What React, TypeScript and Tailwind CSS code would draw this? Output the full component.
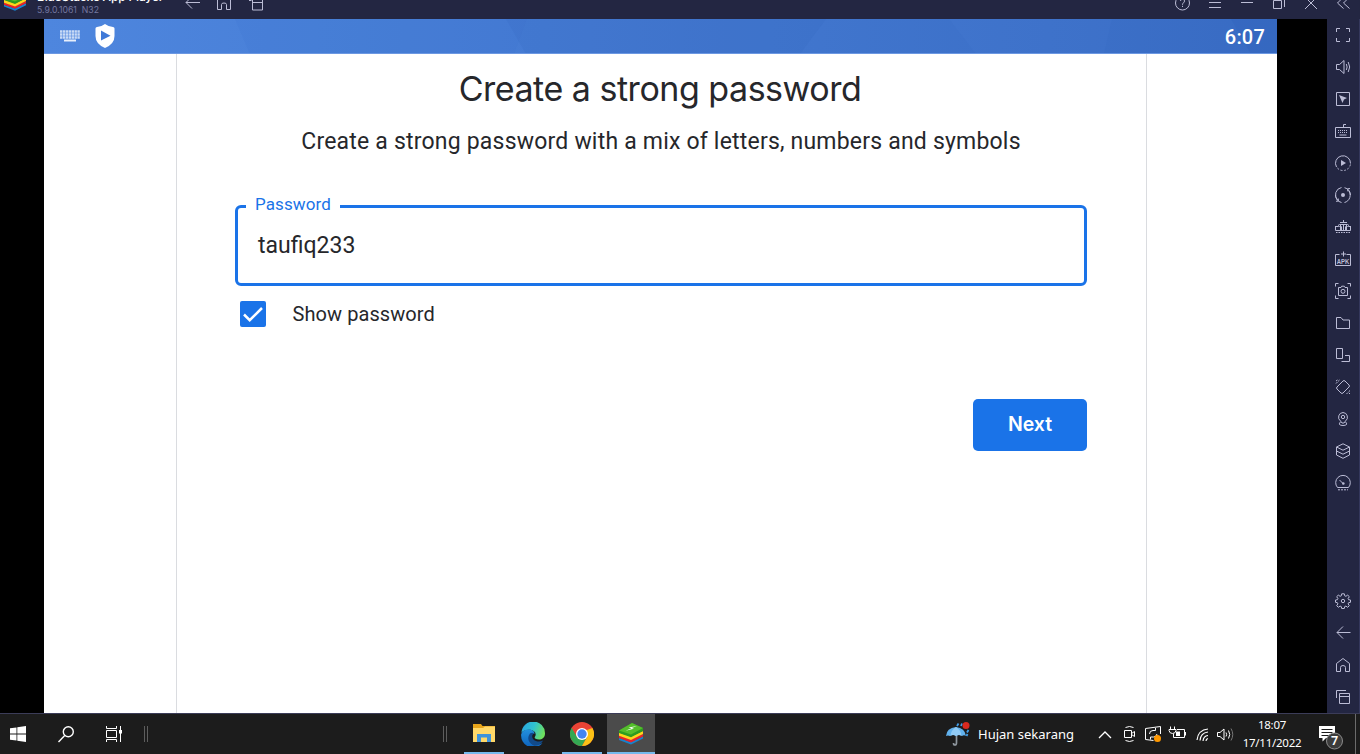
import type { ReactNode } from "react";

function ToolIcon({ children }: { children: ReactNode }) {
  return (
    <button className="flex h-8 w-full shrink-0 items-center pl-2">
      <svg width="16" height="16" viewBox="0 0 16 16" fill="none" stroke="#bcbdd6" strokeWidth="1" className="overflow-visible">
        {children}
      </svg>
    </button>
  );
}

function BlueStacksLogo({ className }: { className: string }) {
  return (
    <svg viewBox="0 0 24 24" className={className}>
      <path d="M0 16 12 20 24 14.500v2L12 22.500 0 18z" fill="#1583cf" />
      <path d="M0 13.500 12 17.500 24 12v2.500L12 20.500 0 16z" fill="#e5232c" />
      <path d="M0 10.500 12 14.500 24 9v3L12 18 0 13.800z" fill="#ffd51c" />
      <path d="M13 1 24 6v3L12 15.300 0 11V8.500z" fill="#2c9c20" />
      <path d="M13 1 24 6 12 12.500 0 8.500z" fill="#55bd2c" />
      <path d="M18 4 9.500 5.500l3 .7L6.500 8.700 15 6.700l-2.500-.8z" fill="#fff" />
    </svg>
  );
}

function TitleBar() {
  return (
    <header className="flex h-[19px] w-full shrink-0 items-start overflow-hidden bg-[#232642]">
      <div className="h-[19px] w-[37px] shrink-0 pl-1">
        <BlueStacksLogo className="-mt-[11px] h-[24px] w-[22px]" />
      </div>
      <div className="-mt-[11px] flex w-[148px] shrink-0 flex-col whitespace-nowrap font-['Inter',sans-serif]">
        <span className="h-4 text-[12px] leading-[16px] font-medium tracking-[-0.15px] text-white">BlueStacks App Player</span>
        <span className="h-3 text-[8.700px] leading-[11px] whitespace-pre text-[#7477a0]">5.9.0.1061  N32</span>
      </div>
      <svg width="80" height="19" viewBox="185 0 80 19" fill="none" stroke="#bcbdd6" className="shrink-0">
        <path d="M186 2.500h14M192 -3.500 186 2.500l6 6" />
        <path d="M217.500 -1v10.500h4V4.500q0-1.500 2.500-1.500t2.500 1.500v5h4V-1" />
        <path d="M249 .5h2.500M252.500 -2v12h10V-2M252.500 2.500h10" />
      </svg>
      <div className="grow" />
      <svg width="190" height="19" viewBox="1170 0 190 19" fill="none" stroke="#bcbdd6" className="shrink-0">
        <circle cx="1182.500" cy="3" r="7" />
        <path d="M1180.500 1q0-2 2-2t2 2q0 1-1 1.800t-1 2M1182.500 5.800v1.200" />
        <path d="M1209 2.500h12M1209 7.500h12" />
        <path d="M1241 2.500h12" />
        <path d="M1273.500 .5h8v8h-8zM1275 -2.500h9.500V7" />
        <path d="m1305 -3 12 12M1317 -3l-12 12" />
        <path d="m1343.500 -3-6 6 6 5.500M1349.500 -3l-6 6 6 5.500" />
      </svg>
    </header>
  );
}

function Sidebar() {
  return (
    <aside className="flex h-full w-[33px] shrink-0 flex-col border-r border-[#34375c] bg-[#232642]">
      <ToolIcon><path d="M1.500 5V1.500H5M11 1.500h3.500V5M14.500 11v3.500H11M5 14.500H1.500V11" /></ToolIcon>
      <ToolIcon>
        <path d="M1.500 5.500h3l4.500-4v13l-4.500-4h-3zM11.300 5q1.600 3 0 6M13.200 3q3 5 0 10" />
      </ToolIcon>
      <ToolIcon>
        <path d="M1.500 1.500h13v13h-13z" />
        <path d="M4 4l8 3-3 1.500L7.500 12z" fill="#bcbdd6" stroke="none" />
      </ToolIcon>
      <ToolIcon>
        <path d="M.5 4.500h15v10H.5zM8.500 4V1.500H11" />
        <path d="M3 7.500h10M3 9.500h10" strokeDasharray="1 1" />
        <path d="M4.500 12h7" />
      </ToolIcon>
      <ToolIcon>
        <path d="M1.500 12A7.500 7.500 0 1 1 15.500 8.500" />
        <path d="M15.400 9.500A7.500 7.500 0 0 1 2 12.500" strokeDasharray="2 1.600" />
        <path d="M6 5v6l5-3z" fill="#bcbdd6" stroke="none" />
      </ToolIcon>
      <ToolIcon>
        <path d="M6.500 .5A7.500 7.500 0 0 0 2.500 13M9.500 .7q5.500 1.300 6 7.300M13.500 3.500A7.500 7.500 0 0 1 9.500 15.500M.5 8q.3 6 6 7.500" />
        <path d="m1 14.300 2.300-.2V11.500M15 1.500l-2.300.3v2.500" />
        <circle cx="8" cy="8" r="2" fill="#bcbdd6" stroke="none" />
      </ToolIcon>
      <ToolIcon>
        <path d="M8.500 1v3M5 3.500h7M3.500 6.500q0-1 1-1h8q1 0 1 1M.5 7v4.500h15V7M.5 7.500h3v-1M15.500 7.500h-2v-1M5.500 6v5M8.500 6v5M11.500 6v5" />
        <path d="M4.500 8 5.500 6.500 6.500 8v3M10.500 11V8l1-1.500 1 1.500" />
        <path d="M1 13.500h14" strokeDasharray="1.500 1" />
      </ToolIcon>
      <ToolIcon>
        <path d="M4.500 3.500h-4v11h15v-11h-4M8.500 .5v5M6 3h5" />
        <text x="8" y="12.700" textAnchor="middle" textLength="12.500" fontSize="7" fontWeight="700" fontFamily="Liberation Sans, sans-serif" fill="#bcbdd6" stroke="none" lengthAdjust="spacingAndGlyphs">APK</text>
      </ToolIcon>
      <ToolIcon>
        <path d="M.5 3.500v-3h3M12.500 .5h3v3M15.500 12.500v3h-3M3.500 15.500h-3v-3" />
        <path d="M3.500 4.500H6l.7-1.300h2.600l.7 1.300h2.500v8h-9z" />
        <circle cx="8" cy="8.300" r="2" />
      </ToolIcon>
      <ToolIcon><path d="M1.500 13.500v-11H6l2 2.500h6.500v8.500z" /></ToolIcon>
      <ToolIcon><path d="M1.500 1.500h6v10h-6zM10 8.500h4.500v6h-8" /></ToolIcon>
      <ToolIcon>
        <path d="m10 2 4 4q1 1 0 2l-6 6q-1 1-2 0l-4-4q-1-1 0-2l6-6q1-1 2 0z" />
        <path d="M1 4.500 4.500 1M1 2l1.500-1M11.500 15l3.500-3.500M14 15l1-1" strokeDasharray="2 1" />
      </ToolIcon>
      <ToolIcon>
        <path d="M8 1.500a4.700 4.700 0 0 1 2.500 8.500L9 12H7l-1.500-2A4.700 4.700 0 0 1 8 1.500z" />
        <circle cx="8" cy="6" r="1.700" />
        <path d="M5.500 11Q4 12 4.500 13.500q1 1 3.500 1t3.500-1q.5-1.500-1-2.500" />
      </ToolIcon>
      <ToolIcon>
        <path d="M8 .8 14.500 4 8 7.200 1.500 4zM1.500 4v8L8 15.300 14.500 12V4M1.500 8 8 11.200 14.500 8" />
      </ToolIcon>
      <ToolIcon>
        <path d="M2.500 12.500A7.300 7.300 0 1 1 13.500 12.500zM4.500 5 8 8.500" />
        <circle cx="8.300" cy="8.500" r="1.300" fill="#bcbdd6" stroke="none" />
        <path d="M3 14.800h10" strokeDasharray="2 1" />
      </ToolIcon>
      <div className="grow" />
      <ToolIcon>
        <path d="M6.700.8h2.600l.4 2 1.200.5 1.800-1.200 1.600 1.600L13.100 5.500l.5 1.200 1.900.3v2.300l-1.900.4-.5 1.200 1.200 1.800-1.600 1.600-1.800-1.200-1.200.5-.4 1.900H6.700l-.4-1.900-1.200-.5-1.800 1.200-1.600-1.600 1.200-1.800-.5-1.200L.5 9.300V7l1.900-.3.5-1.200-1.200-1.800 1.600-1.600 1.800 1.200 1.200-.5z" />
        <circle cx="8" cy="8" r="1.700" />
      </ToolIcon>
      <ToolIcon><path d="M2 7.500h13.500M8 1.500l-6 6 6 6" /></ToolIcon>
      <ToolIcon><path d="M1.500 14.500v-8L8 1.500l6.500 5v8h-4v-4q0-2-2.500-2t-2.500 2v4z" /></ToolIcon>
      <ToolIcon><path d="M1.500 9V1.500H11M4.500 4.500h10v10h-10zM4.500 7.500h10" /></ToolIcon>
    </aside>
  );
}

function StatusBar() {
  return (
    <div className="relative flex h-[35px] shrink-0 items-center justify-between overflow-hidden border-b border-[#6c98e2] bg-linear-to-r from-[#4e86de] to-[#386bc3] pr-[12px] pl-[15px]">
      <svg className="absolute inset-0 h-[35px] w-full" viewBox="0 0 1233 35" preserveAspectRatio="none">
        <path d="M191 0 206 35H470L483 0z" fill="#2f66c4" opacity=".07" />
        <path d="M462 0h320l-26 35H482z" fill="#2458b5" opacity=".1" />
        <path d="M905 0 932 35H1060l8-35z" fill="#6a9bea" opacity=".06" />
        <path d="m1187 0 20 35h26V0z" fill="#1d52ad" opacity=".12" />
      </svg>
      <div className="relative flex items-center gap-[14px]">
        <svg width="22" height="14" viewBox="0 0 22 14" fill="none" stroke="#e7effb">
          <path d="M1 2.500h20M1 5.500h20M1 8.500h20" strokeWidth="2.500" strokeDasharray="2.400 .5" opacity=".8" />
          <path d="M5 11.500h12" strokeWidth="2" />
        </svg>
        <svg width="20" height="24" viewBox="0 0 20 24">
          <path d="M10 0q4 3 8 3 1.500 0 1.500 1.500V12q0 8-9.500 12Q.5 20 .5 12V4.500Q.5 3 2 3 6 3 10 0z" fill="#fff" />
          <path d="m6 6.500 9.500 5.300L6 16.500z" fill="#3f79d8" />
        </svg>
      </div>
      <span className="relative pt-[2px] text-[20px] leading-6 font-medium tracking-[0.2px] text-white">6:07</span>
    </div>
  );
}

function PasswordScreen() {
  return (
    <main className="flex w-[1233px] grow flex-col bg-white font-['Roboto',sans-serif] text-[#26272b]">
      <StatusBar />
      <div className="ml-[132px] flex w-[971px] grow flex-col border-x border-[#dadce0] pr-[59px] pl-[58px]">
        <h1 className="mt-[15px] pr-[2px] text-center font-['Inter',sans-serif] text-[34px] leading-10 tracking-[-0.480px] whitespace-nowrap">Create a strong password</h1>
        <p className="mt-[17px] text-center text-[23px] leading-8 tracking-[0.200px] whitespace-nowrap">Create a strong password with a mix of letters, numbers and symbols</p>
        <div className="relative mt-[47px] flex h-[81px] items-center rounded-[6px] border-[3px] border-[#1a73e8] pl-[20px]">
          <label className="absolute -top-[14px] left-2 w-[94px] bg-white pl-[9px] text-[17px] leading-5 tracking-[0.100px] text-[#1a73e8]">Password</label>
          <span className="text-[23px] leading-[30px]">taufiq233</span>
        </div>
        <label className="mt-[15px] flex h-[26px] items-center gap-[27px] pl-[4.500px]">
          <span className="flex size-[26px] items-center justify-center rounded-[2px] bg-[#1a73e8]">
            <svg width="20" height="20" viewBox="0 0 20 20" fill="none" stroke="#fff" strokeWidth="2.500"><path d="m1 10.500 5.700 5.700L19 4" /></svg>
          </span>
          <span className="text-[20px] leading-[26px] tracking-[0.080px]">Show password</span>
        </label>
        <button className="mt-[72px] flex h-[52px] w-[114px] items-center justify-center self-end rounded-[5px] bg-[#1a73e8] pb-[1px] font-['Inter',sans-serif] text-[19.500px] font-semibold text-white">Next</button>
      </div>
    </main>
  );
}

function Taskbar() {
  return (
    <footer className="flex h-[41px] w-full shrink-0 items-stretch border-t border-[#3b3c58] bg-[#1c1c1c] font-['Noto_Sans',sans-serif] text-white">
      <div className="flex w-9 items-center justify-center">
        <svg width="16" height="16" viewBox="0 0 16 16" fill="#fff"><path d="M0 2.300 6.500 1.400v6.200H0zM7.300 1.300 16 0v7.600H7.300zM0 8.400h6.500v6.200L0 13.700zM7.300 8.400H16V16l-8.700-1.300z" /></svg>
      </div>
      <div className="flex w-[60px] items-center justify-center">
        <svg width="16" height="17" viewBox="0 0 16 17" fill="none" stroke="#fff" strokeWidth="1.400"><circle cx="10.300" cy="5.800" r="5" /><path d="M6.700 9.500.5 16" /></svg>
      </div>
      <div className="flex w-9 items-center justify-center">
        <svg width="16" height="16" viewBox="0 0 16 16" fill="none" stroke="#fff">
          <path d="M.5 0v2.500h10V0M.5 4.500h10v7H.5zM.5 16v-2.500h10V16M14.500 0v16" /><path d="M13 4h3v3.500h-3z" fill="#fff" stroke="none" />
        </svg>
      </div>
      <div className="ml-3 flex w-[4px] items-center justify-between"><i className="h-4 w-px bg-[#5d5d5d]" /><i className="h-4 w-px bg-[#5d5d5d]" /></div>
      <div className="ml-[295px] flex w-[4px] items-center justify-between"><i className="h-4 w-px bg-[#5d5d5d]" /><i className="h-4 w-px bg-[#5d5d5d]" /></div>
      <div className="ml-[17px] flex w-10 items-center justify-center border-b-2 border-[#76b9ed]">
        <svg width="22" height="20" viewBox="0 0 22 20">
          <path d="M0 1h8l1.500 2H22v16H0z" fill="#e8a51a" />
          <path d="M0 5h10l2-1.500h10V19H0z" fill="#ffd869" />
          <path d="M4 11h14v8h-4v-4.500H8V19H4z" fill="#3d93dc" />
        </svg>
      </div>
      <div className="ml-[9px] flex w-10 items-center justify-center">
        <svg width="24" height="24" viewBox="0 0 24 24">
          <defs>
            <linearGradient id="edgeTop" x1="0" x2="1" y1=".2" y2=".5"><stop stopColor="#2aa5e0" /><stop offset=".5" stopColor="#30c2d0" /><stop offset="1" stopColor="#6fe05c" /></linearGradient>
            <linearGradient id="edgeSide" x1="0" x2="0" y1="0" y2="1"><stop stopColor="#2390dd" /><stop offset="1" stopColor="#0d62bd" /></linearGradient>
          </defs>
          <path d="M.5 11A11.700 11.700 0 0 1 24 11.500c0 4-3 6-6 6-3.500 0-4.800-1.300-4.200-2.500C16 12 14 8.500 9.500 7.800 5 7.200 1.500 9 .5 11z" fill="url(#edgeTop)" />
          <path d="M.2 12C1.500 8.500 5 7.300 8.500 7.600c3.500.4 5 2.400 5 4.200-5-1-7 6-.5 9.700 3 1.600 6 1 8.500-.5A12 12 0 0 1 .2 12z" fill="url(#edgeSide)" />
          <path d="M9 11.500c-3.500 4.500-1.500 10 4.500 12.300 4-.2 7-2.300 8.700-5.300-3 1.500-7 1.500-9.700-1C11 16 10.500 13 13 11.300 12 10.300 10 10.500 9 11.500z" fill="#114a8b" />
        </svg>
      </div>
      <div className="ml-[9px] flex w-10 items-center justify-center border-b-2 border-[#76b9ed]">
        <svg width="24" height="24" viewBox="0 0 24 24" className="mt-px">
          <circle cx="12" cy="12" r="12" fill="#ea4335" />
          <path d="M12 12 1.600 6A12 12 0 0 0 12 24l5-9z" fill="#34a853" />
          <path d="M12 6h10.400A12 12 0 0 1 12 24l5.200-9z" fill="#fbc116" />
          <path d="M1.600 6H22.400L17 8H12L6.800 15z" fill="#ea4335" />
          <path d="M1.600 6 6.800 15 10 18 7 19.500Q0 16 1.600 6z" fill="#34a853" />
          <circle cx="12" cy="12" r="6" fill="#fff" /><circle cx="12" cy="12" r="4.700" fill="#4285f4" />
        </svg>
      </div>
      <div className="ml-[5px] flex w-12 items-center justify-center border-b-2 border-[#76b9ed] bg-[#4b4b4b]">
        <BlueStacksLogo className="mt-px size-[24px]" />
      </div>
      <div className="grow" />
      <div className="flex w-[149px] items-center gap-2">
        <svg width="24" height="24" viewBox="0 0 24 24" className="shrink-0">
          <path d="M8.500 6v13.500q0 2.500-1.500 2.500t-1.500-2" fill="none" stroke="#8f979e" strokeWidth="1.700" transform="translate(2 1)" />
          <path d="M0 14Q.5 6 10 5q9 1 10 9-2-1.500-4 0-3-2-6 0-3-2-6 0-2-1-4 0z" fill="#61b1ed" />
          <path d="M10 5Q5 8 4.500 14q2.500-1.800 5.500 0 3-1.800 5.500 0Q15 8 10 5z" fill="#91cbf5" />
          <path d="m11 4 1.500-2.500M15 4l1-2.500M21 10.500 22.500 8M20.500 14l1-2" stroke="#3f9de8" strokeWidth="1.800" />
          <circle cx="20" cy="3.500" r="3.500" fill="#d8291f" />
        </svg>
        <span className="text-[13px] leading-5 whitespace-nowrap">Hujan sekarang</span>
      </div>
      <svg width="142" height="40" viewBox="1095 714 142 40" fill="none" stroke="#fff" className="shrink-0">
        <path d="m1099 738 6-6 6 6" strokeWidth="1.300" />
        <path d="M1124.500 730.500h7v7h-7zM1131.500 733.500l3-2v5l-3-2M1125.500 727.500q4-2 8 0M1125.500 740.500q4 2 8 0" />
        <path d="M1160.500 734v-7.500l-15 2v11l8 1" />
        <path d="M1149.500 734q0-3.500 3.500-3.500h2.500V728M1157 734q-.5 3-3.500 3h-3v2.500" />
        <circle cx="1157.500" cy="738.500" r="3.500" fill="#ff9800" stroke="none" />
        <path d="M1177 729.500h7.500v8h-11v-4M1185.500 732v3.500M1170.500 726.500v3M1174.500 726.500v3M1169 729.500h7v1q-.5 3-3.500 3t-3.500-3z" />
        <path d="M1176 731.500h4v4.500h-4z" fill="#fff" stroke="none" />
        <path d="M1197 740q1-10 11-11M1200 740.500q.5-7.500 8-8.500M1203 741q.5-5 5-5.500M1206 741q0-2 2-2.500" strokeWidth="1.200" />
        <path d="M1217.500 732.500h2.500l4-3.500v11l-4-3.500h-2.500zM1226 732.500q1.300 2 0 4M1228.500 730.500q2.500 4 0 8" />
        <path d="M1231 728.500q3.500 6 0 12" stroke="#777" />
      </svg>
      <div className="flex w-[70px] shrink-0 flex-col items-center justify-center text-[11.500px] leading-[18px] tracking-[-0.250px] whitespace-nowrap">
        <span>18:07</span>
        <span>17/11/2022</span>
      </div>
      <svg width="53" height="40" viewBox="1307 714 53 40" className="shrink-0">
        <path d="M1319 726h16v12h-9l-3.500 3.500V738h-3.500z" fill="#fff" />
        <path d="M1321.500 729.500h11M1321.500 732.500h11M1321.500 735.500h8" stroke="#1c1c1c" />
        <circle cx="1334.500" cy="741" r="8" fill="#3c3c3c" stroke="#8b8b8b" />
        <text x="1334.500" y="745.300" textAnchor="middle" fontSize="12.500" fontWeight="600" fill="#fff">7</text>
        <path d="M1355.500 714v40" stroke="#6b6b6b" />
      </svg>
    </footer>
  );
}

export default function App() {
  return (
    <div className="flex h-[754px] w-[1360px] flex-col overflow-hidden bg-black">
      <TitleBar />
      <div className="flex h-[694px] shrink-0">
        <div className="flex h-full w-[1327px] flex-col bg-black pl-[44px]">
          <PasswordScreen />
        </div>
        <Sidebar />
      </div>
      <Taskbar />
    </div>
  );
}
